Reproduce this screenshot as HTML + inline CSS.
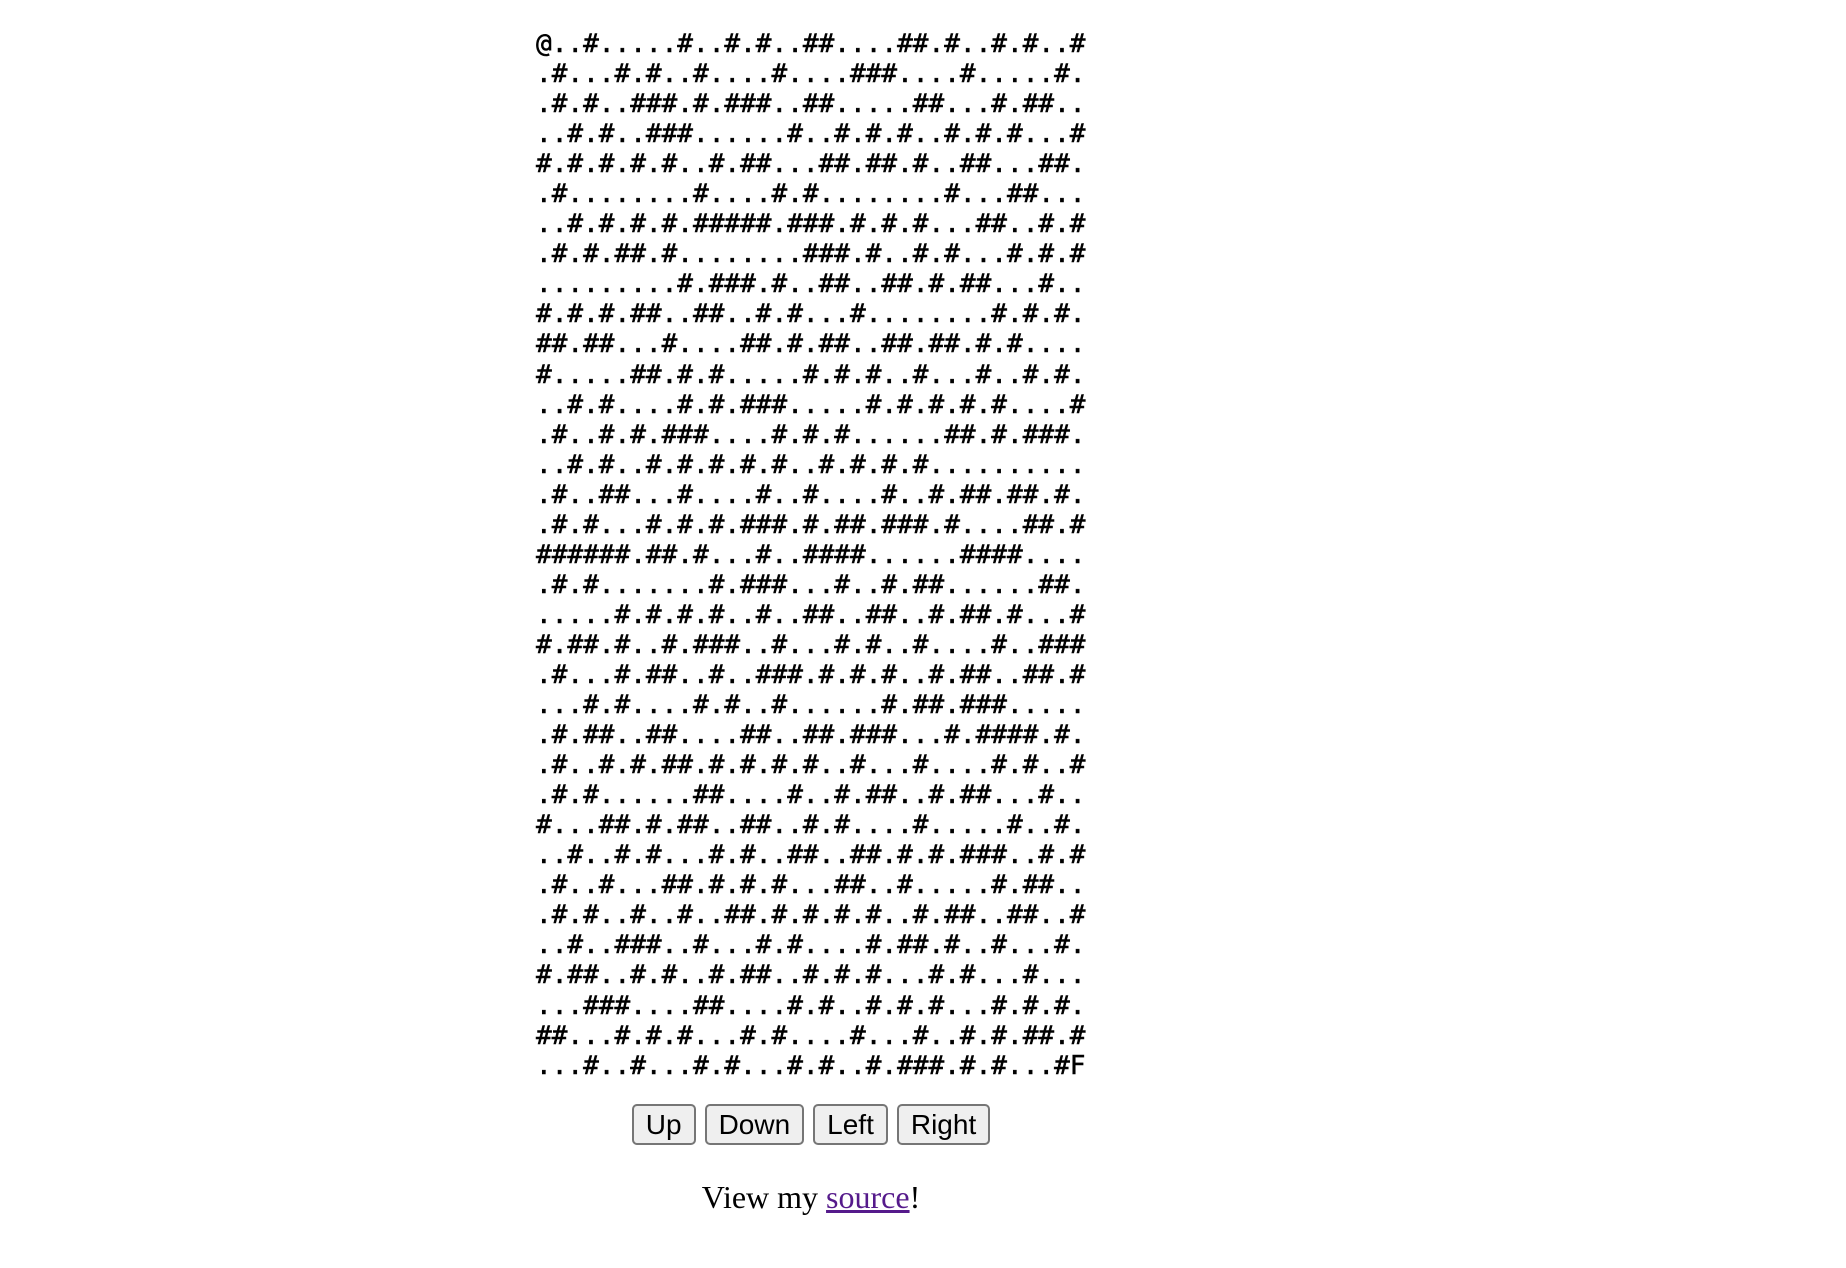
<!DOCTYPE html>
<html><head><meta charset="utf-8">
<style>
html,body{margin:0;padding:0;background:#fff;width:1846px;height:1268px;overflow:hidden}
pre{position:absolute;left:536px;top:29px;margin:0;font-family:"DejaVu Sans Mono","Liberation Mono",monospace;font-size:26.08px;line-height:30.04px;color:#000;-webkit-text-stroke:0.5px #000}
.btns{position:absolute;left:0;width:1622px;top:1104px;text-align:center;font-size:0}
button{font-family:"Liberation Sans",Arial,sans-serif;font-size:28px;height:41px;padding:0 12px;margin:0 4.5px;background:#efefef;border:2px solid #767676;border-radius:5px;color:#000;vertical-align:top}
.src{position:absolute;left:0;width:1622px;top:1177px;text-align:center;font-family:"Liberation Serif","Times New Roman",serif;font-size:32px;line-height:40px;color:#000}
a{color:#551a8b}
</style></head><body>
<pre>@..#.....#..#.#..##....##.#..#.#..#
.#...#.#..#....#....###....#.....#.
.#.#..###.#.###..##.....##...#.##..
..#.#..###......#..#.#.#..#.#.#...#
#.#.#.#.#..#.##...##.##.#..##...##.
.#........#....#.#........#...##...
..#.#.#.#.#####.###.#.#.#...##..#.#
.#.#.##.#........###.#..#.#...#.#.#
.........#.###.#..##..##.#.##...#..
#.#.#.##..##..#.#...#........#.#.#.
##.##...#....##.#.##..##.##.#.#....
#.....##.#.#.....#.#.#..#...#..#.#.
..#.#....#.#.###.....#.#.#.#.#....#
.#..#.#.###....#.#.#......##.#.###.
..#.#..#.#.#.#.#..#.#.#.#..........
.#..##...#....#..#....#..#.##.##.#.
.#.#...#.#.#.###.#.##.###.#....##.#
######.##.#...#..####......####....
.#.#.......#.###...#..#.##......##.
.....#.#.#.#..#..##..##..#.##.#...#
#.##.#..#.###..#...#.#..#....#..###
.#...#.##..#..###.#.#.#..#.##..##.#
...#.#....#.#..#......#.##.###.....
.#.##..##....##..##.###...#.####.#.
.#..#.#.##.#.#.#.#..#...#....#.#..#
.#.#......##....#..#.##..#.##...#..
#...##.#.##..##..#.#....#.....#..#.
..#..#.#...#.#..##..##.#.#.###..#.#
.#..#...##.#.#.#...##..#.....#.##..
.#.#..#..#..##.#.#.#.#..#.##..##..#
..#..###..#...#.#....#.##.#..#...#.
#.##..#.#..#.##..#.#.#...#.#...#...
...###....##....#.#..#.#.#...#.#.#.
##...#.#.#...#.#....#...#..#.#.##.#
...#..#...#.#...#.#..#.###.#.#...#F</pre>
<div class="btns"><button>Up</button><button>Down</button><button>Left</button><button>Right</button></div>
<div class="src">View my <a href="#">source</a>!</div>
</body></html>
